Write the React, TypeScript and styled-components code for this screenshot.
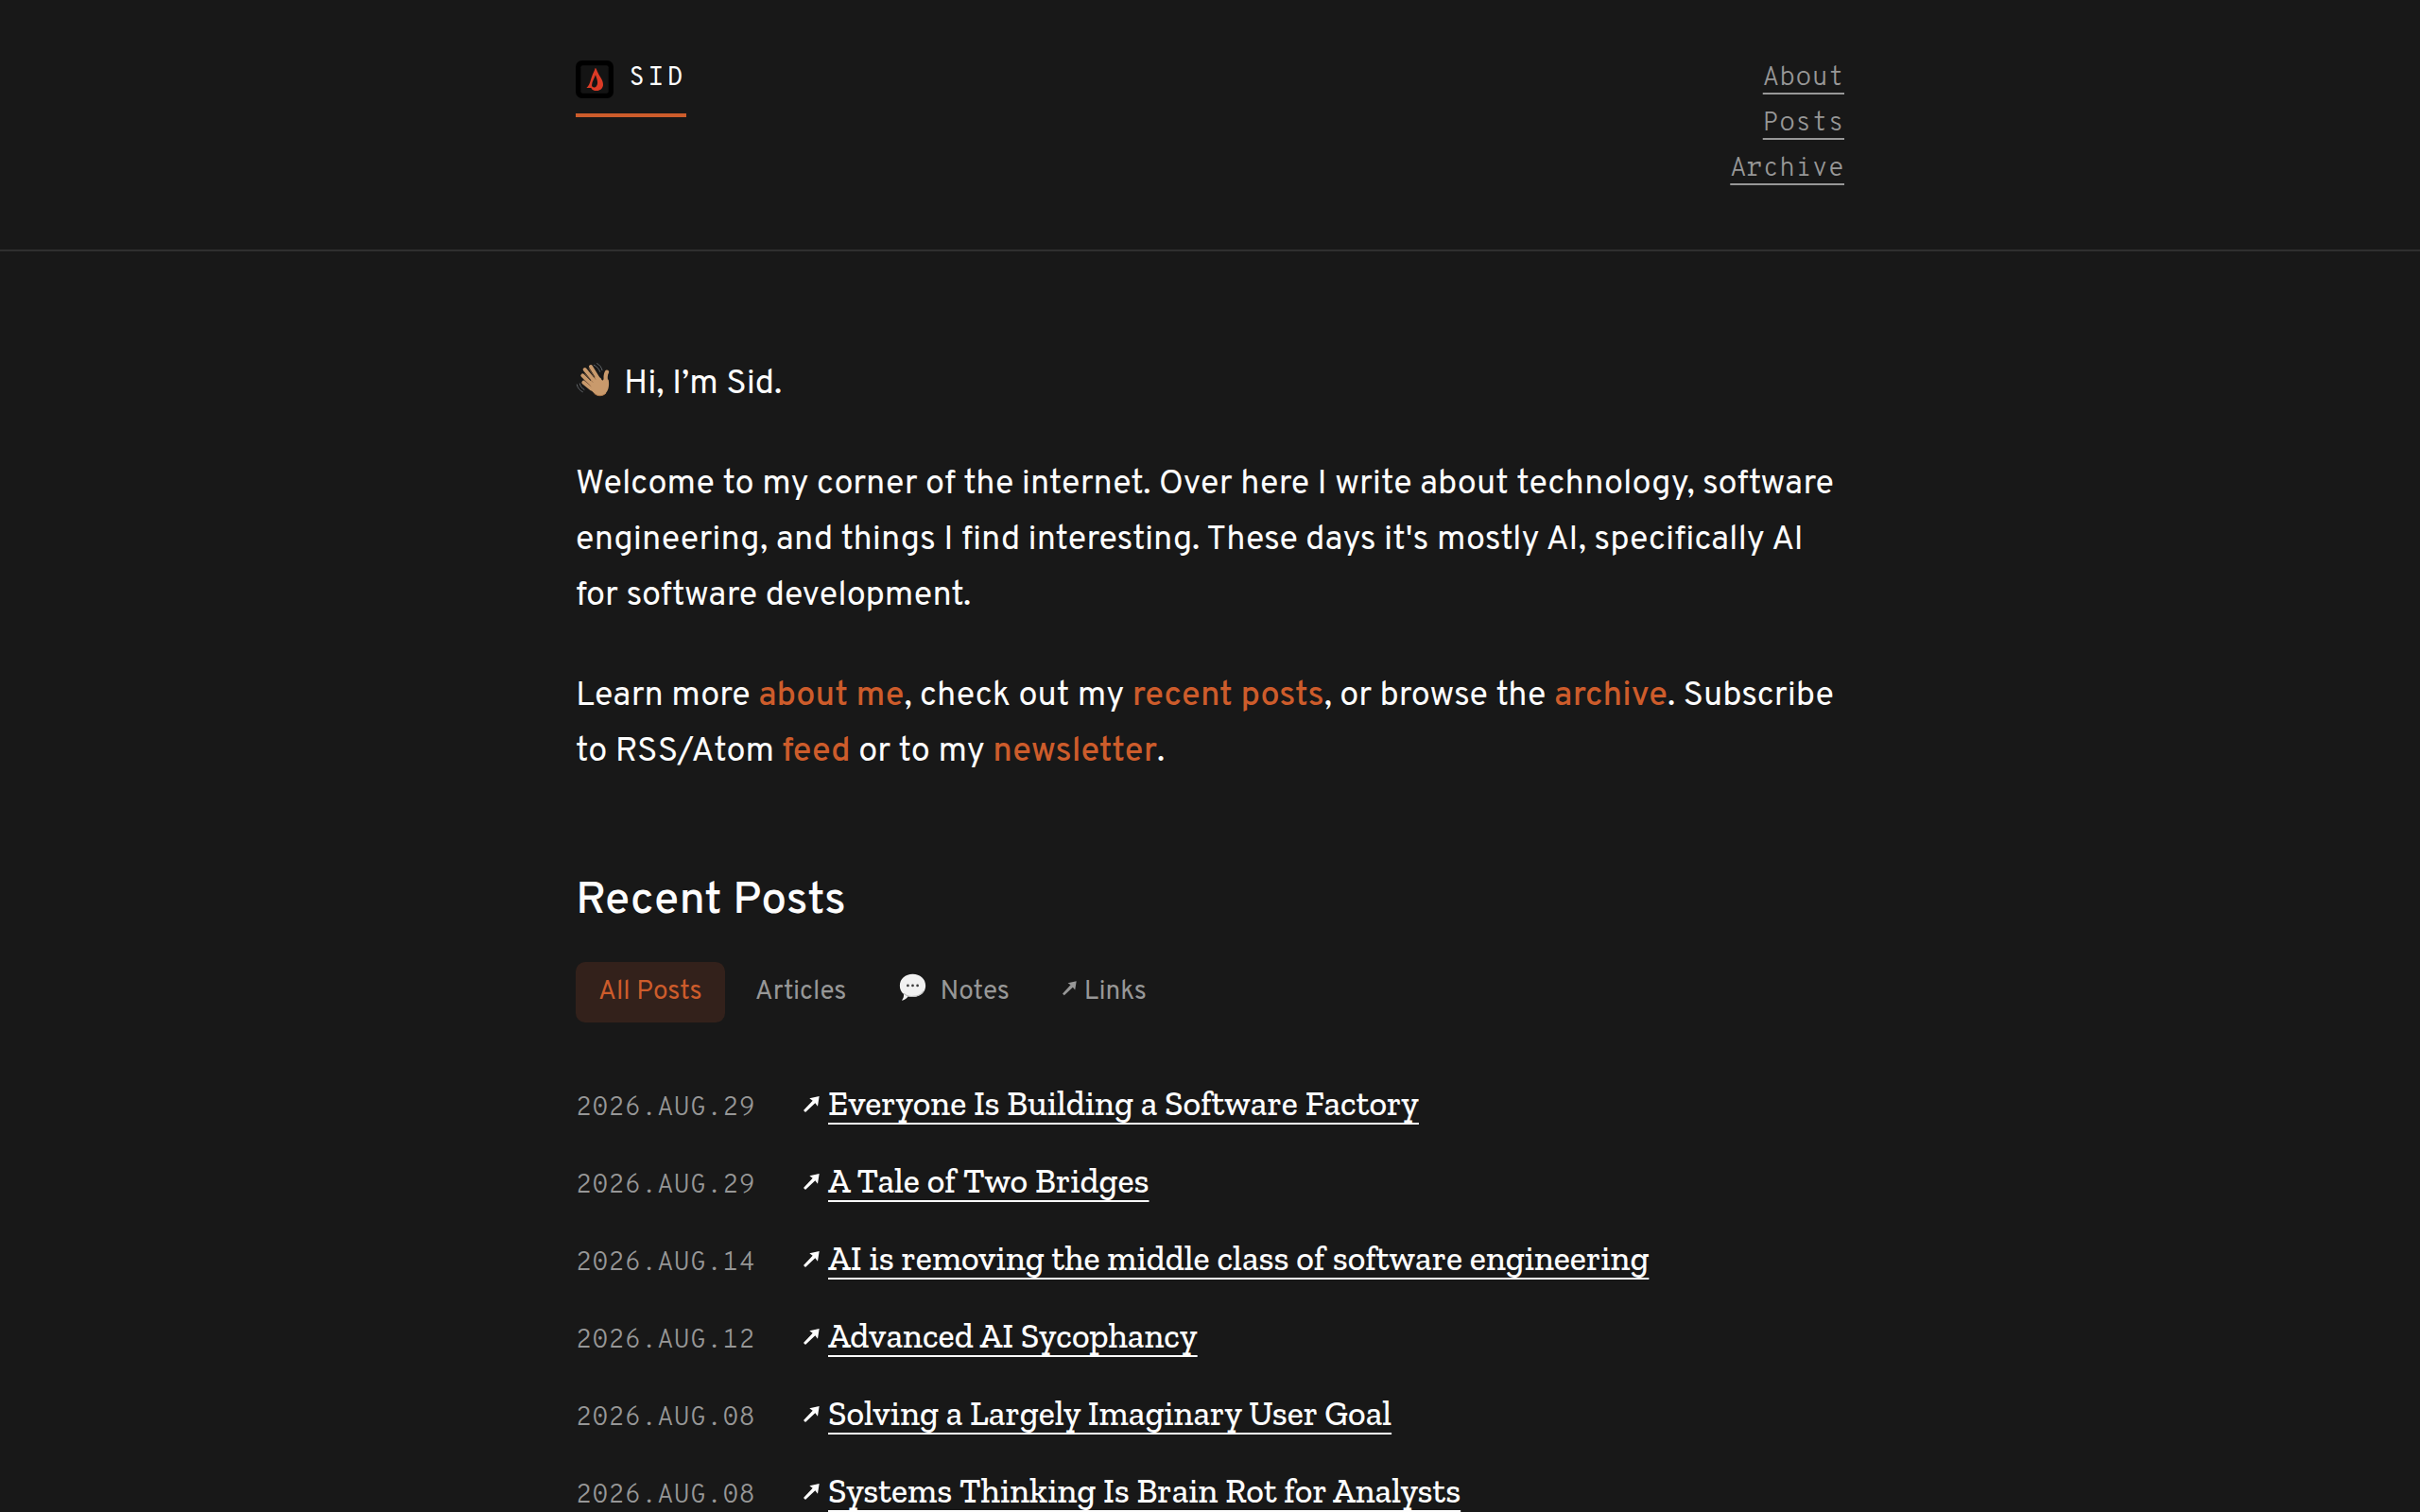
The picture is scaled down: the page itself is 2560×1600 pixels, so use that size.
import React from "react";
import styled, { createGlobalStyle } from "styled-components";

const sans = `Overpass, Roboto, "Liberation Sans", sans-serif`;
const mono = `"Overpass Mono", "Liberation Mono", monospace`;
const slab = `"Zilla Slab", "DejaVu Serif Condensed", serif`;

const accent = "#cd5c2b";
const muted = "#979797";

const GlobalStyle = createGlobalStyle`
  *, *::before, *::after { box-sizing: border-box; }
  body {
    margin: 0;
    background: #181818;
    color: #fdfdfd;
    font-family: ${sans};
    font-size: 36px;
    line-height: 59px;
  }
`;

const Header = styled.header`
  padding: 59px 48px 61px;
  border-bottom: 2px solid #2f2f2f;
`;

const Column = styled.div`
  max-width: 1342px;
  margin: 0 auto;
`;

const Bar = styled(Column)`
  display: flex;
  justify-content: space-between;
  align-items: flex-start;
`;

const Brand = styled.a`
  display: flex;
  gap: 16px;
  margin-top: 5px;
  padding-bottom: 16px;
  border-bottom: 4px solid ${accent};
  color: inherit;
  font-family: ${mono};
  font-size: 28px;
  line-height: 38px;
  letter-spacing: 3px;
  text-decoration: none;
`;

const Nav = styled.nav`
  display: flex;
  flex-direction: column;
  align-items: flex-end;
`;

const NavLink = styled.a`
  color: ${muted};
  font-family: ${mono};
  font-size: 28px;
  font-weight: 300;
  line-height: 48px;
  text-decoration: underline;
  text-decoration-thickness: 2px;
  text-underline-offset: 8px;
`;

const Main = styled.main`
  padding: 112px 48px 0;
`;

const Paragraph = styled.p`
  margin: 0 0 47px;
`;

const InlineLink = styled.a`
  color: ${accent};
  font-weight: 500;
  text-decoration: none;
`;

const Heading = styled.h2`
  margin: 98px 0 34px;
  font-size: 48px;
  font-weight: 500;
  line-height: 60px;
`;

const Filters = styled.div`
  display: flex;
  gap: 8px;
  margin-bottom: 57px;
`;

const FilterButton = styled.button<{ $active?: boolean }>`
  display: flex;
  padding: 12px 24px;
  border: 0;
  border-radius: 10px;
  background: ${(p) => (p.$active ? "#33211b" : "transparent")};
  color: ${(p) => (p.$active ? accent : muted)};
  font-family: ${sans};
  font-size: 28px;
  line-height: 40px;
  cursor: pointer;
`;

const PostList = styled.ul`
  display: flex;
  flex-direction: column;
  gap: 24px;
  margin: 0;
  padding: 0;
  list-style: none;
`;

const Post = styled.li`
  display: flex;
  align-items: baseline;
  line-height: 58px;
`;

const PostDate = styled.time`
  width: 241px;
  color: ${muted};
  font-family: ${mono};
  font-size: 28px;
  font-weight: 300;
  line-height: 40px;
`;

const PostLink = styled.a`
  color: inherit;
  font-family: ${slab};
  font-weight: 500;
  text-decoration: underline;
  text-decoration-thickness: 2px;
  text-underline-offset: 8px;
`;

const ArrowSvg = styled.svg`
  flex: none;
  width: 17px;
  height: 20px;
  margin-right: 9px;
`;

const TabArrow = styled(ArrowSvg)`
  width: 15px;
  height: 18px;
  margin: 8px 8px 0 0;
`;

const WaveSvg = styled.svg`
  width: 38px;
  height: 38px;
  margin-right: 13px;
  vertical-align: -5px;
`;

const BubbleSvg = styled.svg`
  width: 29px;
  height: 30px;
  margin-right: 14px;
`;

const Flame = () => (
  <svg width="40" height="40" viewBox="0 0 120 120" aria-hidden="true">
    <rect width="120" height="120" rx="20" fill="#000" />
    <rect x="16" y="16" width="88" height="88" rx="6" fill="#141414" />
    <path
      fill="#dc3b26"
      fillRule="evenodd"
      d="M62 24C65 24 66 29 68 34C74 49 88 62 87 78C86 90 76 97 65 96C54 96 51 90 49 87L34 87C44 80 46 67 51 52C54 41 60 34 62 24ZM63 46C59 58 52 66 51 79C52 85 57 87 62 85C70 81 71 70 67 58Z"
    />
  </svg>
);

const Wave = () => (
  <WaveSvg viewBox="25 22 114 114" role="img" aria-label="Waving hand">
    <g fill="none" stroke="#c99a6c" strokeLinecap="round" strokeWidth="12">
      <path d="M73 37L97 76" />
      <path d="M54 46L87 86" />
      <path d="M47 65L78 96" />
      <path d="M50 87L74 107" />
      <path d="M124 54C118 64 119 76 122 90" strokeWidth="13" />
    </g>
    <path
      fill="#c99a6c"
      d="M73 80L92 66L105 74C109 83 111 82 116 75L129 78C133 98 128 119 113 127C101 133 88 127 80 118L68 106Z"
    />
    <g fill="none" stroke="#8b6040" strokeLinecap="round" strokeWidth="2">
      <path d="M67 43L88 77M54 60L79 86M52 79L73 99" />
    </g>
    <path d="M84 122C96 133 112 130 121 121" fill="none" stroke="#b47c4d" strokeWidth="3" />
    <g fill="none" stroke="#62666a" strokeLinecap="round" strokeWidth="3">
      <path d="M83 32C92 36 99 44 102 53M93 27C101 31 107 39 109 48" />
      <path d="M38 91C40 100 45 106 52 110M29 94C31 105 38 113 47 117" />
    </g>
  </WaveSvg>
);

const Bubble = () => (
  <BubbleSvg viewBox="0 0 84 88" aria-hidden="true">
    <path
      fill="#f1f1f1"
      d="M42 2C65 2 82 17 82 38C82 59 65 73 43 73C37 73 32 72 28 71C23 78 16 83 8 84C13 78 15 72 14 64C6 58 2 49 2 38C2 17 19 2 42 2Z"
    />
    <path fill="none" stroke="#bdbdbd" strokeWidth="3" d="M14 62C24 74 60 78 76 54" />
    <g fill="#3c3c3c">
      <circle cx="27" cy="38" r="4" />
      <circle cx="42" cy="38" r="4" />
      <circle cx="57" cy="38" r="4" />
    </g>
  </BubbleSvg>
);

const arrowShape = (
  <path fill="currentColor" d="M50 0L45 32L37 22L6 51L0 45L29 14L19 7Z" />
);

const posts = [
  { iso: "2026-08-29", date: "2026.AUG.29", title: "Everyone Is Building a Software Factory" },
  { iso: "2026-08-29", date: "2026.AUG.29", title: "A Tale of Two Bridges" },
  { iso: "2026-08-14", date: "2026.AUG.14", title: "AI is removing the middle class of software engineering" },
  { iso: "2026-08-12", date: "2026.AUG.12", title: "Advanced AI Sycophancy" },
  { iso: "2026-08-08", date: "2026.AUG.08", title: "Solving a Largely Imaginary User Goal" },
  { iso: "2026-08-08", date: "2026.AUG.08", title: "Systems Thinking Is Brain Rot for Analysts" },
];

export default function App() {
  return (
    <>
      <GlobalStyle />
      <Header>
        <Bar>
          <Brand href="#home">
            <Flame />
            SID
          </Brand>
          <Nav aria-label="Main">
            <NavLink href="#about">About</NavLink>
            <NavLink href="#posts">Posts</NavLink>
            <NavLink href="#archive">Archive</NavLink>
          </Nav>
        </Bar>
      </Header>
      <Main>
        <Column>
          <Paragraph>
            <Wave />
            Hi, I’m Sid.
          </Paragraph>
          <Paragraph>
            Welcome to my corner of the internet. Over here I write about technology, software
            engineering, and things I find interesting. These days it's mostly AI, specifically AI
            for software development.
          </Paragraph>
          <Paragraph>
            Learn more <InlineLink href="#about">about me</InlineLink>, check out my{" "}
            <InlineLink href="#posts">recent posts</InlineLink>, or browse the{" "}
            <InlineLink href="#archive">archive</InlineLink>. Subscribe to RSS/Atom{" "}
            <InlineLink href="#feed">feed</InlineLink> or to my{" "}
            <InlineLink href="#newsletter">newsletter</InlineLink>.
          </Paragraph>
          <Heading id="posts">Recent Posts</Heading>
          <Filters>
            <FilterButton type="button" $active>All Posts</FilterButton>
            <FilterButton type="button">Articles</FilterButton>
            <FilterButton type="button">
              <Bubble />
              Notes
            </FilterButton>
            <FilterButton type="button">
              <TabArrow viewBox="0 0 51 60" aria-hidden="true">
                {arrowShape}
              </TabArrow>
              Links
            </FilterButton>
          </Filters>
          <PostList>
            {posts.map((post) => (
              <Post key={post.title}>
                <PostDate dateTime={post.iso}>{post.date}</PostDate>
                <ArrowSvg viewBox="0 0 51 60" aria-hidden="true">
                  {arrowShape}
                </ArrowSvg>
                <PostLink href="#post">{post.title}</PostLink>
              </Post>
            ))}
          </PostList>
        </Column>
      </Main>
    </>
  );
}
